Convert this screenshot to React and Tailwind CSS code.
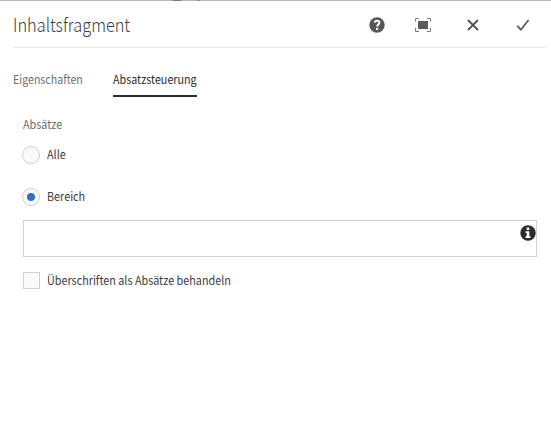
function HelpIcon() {
  return (
    <svg width="16" height="16" viewBox="0 0 16 16" className="block">
      <circle cx="8" cy="8" r="7.7" fill="#585858" />
      <path d="M5.5 5.4C6.2 4.2 7.1 3.8 8.1 3.8c1.4 0 2.3.8 2.3 1.9 0 1.7-2.2 1.7-2.2 3.8" fill="none" stroke="#fff" strokeWidth="2" />
      <rect x="7.1" y="10.8" width="2.1" height="2.1" fill="#fff" />
    </svg>
  );
}

function FullscreenIcon() {
  return (
    <svg width="16" height="14" viewBox="0 0 16 14" className="block">
      <rect x="3" y="3" width="10" height="8" fill="#5c5c5c" />
      <path d="M.5 3.5V.5H4M12 .5h3.5v3M15.5 10v3.5H12M4 13.5H.5V10" fill="none" stroke="#77777f" />
    </svg>
  );
}

function CloseIcon() {
  return (
    <svg width="12" height="12" viewBox="0 0 12 12" className="block">
      <path d="M1 1l10 10M11 1L1 11" stroke="#55534f" strokeWidth="1.9" />
    </svg>
  );
}

function CheckIcon() {
  return (
    <svg width="14" height="12" viewBox="0 0 14 12" className="block">
      <path d="M1.2 6.8l3.6 3.9L12.6 1" fill="none" stroke="#57575f" strokeWidth="1.7" />
    </svg>
  );
}

function InfoIcon() {
  return (
    <svg width="16" height="16" viewBox="0 0 16 16" className="block">
      <circle cx="8" cy="8" r="7.7" fill="#2b2b2b" />
      <path d="M6.7 2.6h2.6v2.4H6.7zM5.5 6.2h3.8v5.1h1.2v1.7H5.5v-1.7h1.2V7.8H5.5z" fill="#fff" />
    </svg>
  );
}

function Radio({ label, checked }) {
  return (
    <label className="flex h-[18px] items-center">
      <span className="flex size-[18px] items-center justify-center rounded-full border border-[#cfcfcf] bg-[#fafafa]">
        {checked && <span className="size-2 rounded-full bg-[#326ec8]" />}
      </span>
      <span className="-mt-0.5 ml-[7px] origin-left scale-x-[0.9] text-[#3c3c3c]">{label}</span>
    </label>
  );
}

export default function App() {
  return (
    <div className="h-[436px] w-[551px] overflow-hidden bg-white font-['Noto_Sans_CJK_SC','Noto_Sans',sans-serif] text-[12px] leading-[18px] whitespace-nowrap">
      <div className="flex h-px bg-[#b4b4b4]">
        <span className="ml-[173px] w-2 bg-[#777777]" />
        <span className="ml-[17px] w-[2px] bg-[#888888]" />
      </div>
      <header className="ml-[13px] flex h-[47px] w-[533px] items-center border-b border-[#e8e8e8]">
        <h1 className="w-[356px] origin-left scale-x-[0.86] text-[19px] leading-[24px] font-light text-[#3c3c3c]">Inhaltsfragment</h1>
        <span className="mt-[2px]"><HelpIcon /></span>
        <span className="mt-[2px] ml-[30px]"><FullscreenIcon /></span>
        <span className="mt-[2px] ml-[36px]"><CloseIcon /></span>
        <span className="mt-[2px] ml-[37px]"><CheckIcon /></span>
      </header>
      <nav className="ml-[13px] flex pt-[22px]">
        <span className="w-[100px] origin-left scale-x-[0.885] text-[#707070]">Eigenschaften</span>
        <span className="h-[27px] w-[84px] border-b-2 border-[#2b2b2b] text-[#2b2b2b]">
          <span className="block origin-left scale-x-[0.895]">Absatzsteuerung</span>
        </span>
      </nav>
      <main className="ml-[22px] pt-[18px]">
        <div className="ml-px w-[100px] origin-left scale-x-[0.9] text-[#6b6b6b]">Absätze</div>
        <div className="mt-[13px] flex flex-col gap-[24px]">
          <Radio label="Alle" />
          <Radio label="Bereich" checked />
        </div>
        <div className="mt-[14px] ml-px flex h-[37px] w-[514px] justify-end border border-[#d0d0d0] pt-1">
          <InfoIcon />
        </div>
        <label className="mt-[15px] ml-px flex h-[17px] items-center">
          <span className="size-[17px] border border-[#d0d0d0] bg-[#fafafa]" />
          <span className="-mt-px ml-[7px] origin-left scale-x-[0.9] text-[#3c3c3c]">Überschriften als Absätze behandeln</span>
        </label>
      </main>
    </div>
  );
}
